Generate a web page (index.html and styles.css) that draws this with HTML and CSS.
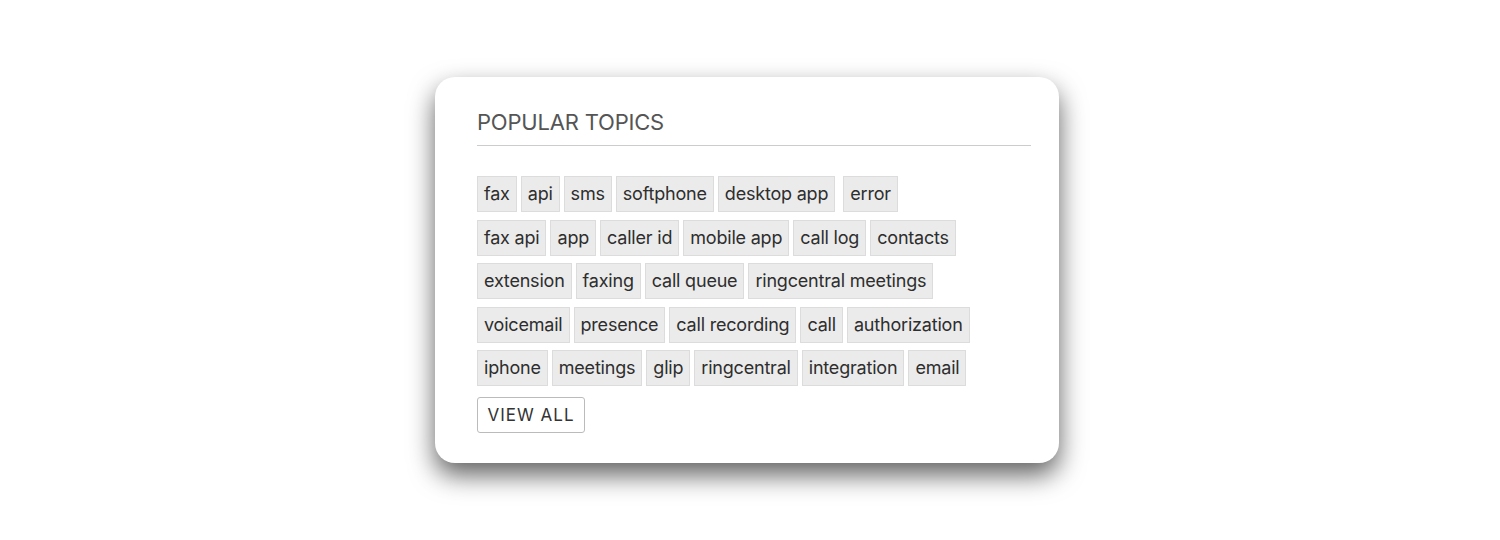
FILE: index.html
```html
<!DOCTYPE html>
<html>
<head>
<meta charset="utf-8">
<link rel="stylesheet" href="styles.css">
</head>
<body>
<div class="stage">
  <section class="card">
    <h2 class="title">POPULAR TOPICS</h2>
    <div class="tags">
      <div class="row"><a class="tag">fax</a><a class="tag">api</a><a class="tag">sms</a><a class="tag">softphone</a><a class="tag">desktop app</a><a class="tag wide">error</a></div>
      <div class="row"><a class="tag">fax api</a><a class="tag">app</a><a class="tag">caller id</a><a class="tag">mobile app</a><a class="tag">call log</a><a class="tag">contacts</a></div>
      <div class="row"><a class="tag">extension</a><a class="tag">faxing</a><a class="tag">call queue</a><a class="tag">ringcentral meetings</a></div>
      <div class="row"><a class="tag">voicemail</a><a class="tag">presence</a><a class="tag">call recording</a><a class="tag">call</a><a class="tag">authorization</a></div>
      <div class="row"><a class="tag">iphone</a><a class="tag">meetings</a><a class="tag">glip</a><a class="tag">ringcentral</a><a class="tag">integration</a><a class="tag">email</a></div>
    </div>
    <button class="view-all">VIEW ALL</button>
  </section>
</div>
</body>
</html>
```

FILE: styles.css
```css
html, body {
  margin: 0;
  padding: 0;
  background: #ffffff;
}
body {
  font-family: Inter, "Noto Sans", sans-serif;
}
.stage {
  width: 1500px;
  height: 540px;
  display: flex;
  align-items: center;
  justify-content: center;
  padding-right: 6px;
  box-sizing: border-box;
}
.card {
  width: 624px;
  box-sizing: border-box;
  background: #fff;
  border-radius: 20px;
  padding: 30px 28px 30px 42px;
  box-shadow: 0 12px 26px rgba(0, 0, 0, 0.62);
}
.title {
  margin: 0 0 30px;
  font-size: 22px;
  line-height: 30px;
  font-weight: 400;
  color: #555;
  letter-spacing: -0.2px;
  padding-bottom: 8px;
  border-bottom: 1px solid #ccc;
}
.tags {
  display: flex;
  flex-direction: column;
  row-gap: 7.5px;
}
.row {
  display: flex;
  column-gap: 4px;
}
.tag {
  display: block;
  box-sizing: border-box;
  height: 36px;
  padding: 5px 6px;
  font-size: 18px;
  line-height: 24px;
  color: #2e2e2e;
  background: #ebebeb;
  border: 1px solid #dcdcdc;
  letter-spacing: -0.2px;
  white-space: nowrap;
}
.tag.wide {
  margin-left: 4px;
}
.view-all {
  display: block;
  margin-top: 11px;
  height: 36px;
  width: 108px;
  padding: 0;
  background: #fff;
  border: 1px solid #bbb;
  border-radius: 3px;
  font-family: Inter, "Noto Sans", sans-serif;
  font-size: 17px;
  letter-spacing: 1px;
  color: #333;
}
```
